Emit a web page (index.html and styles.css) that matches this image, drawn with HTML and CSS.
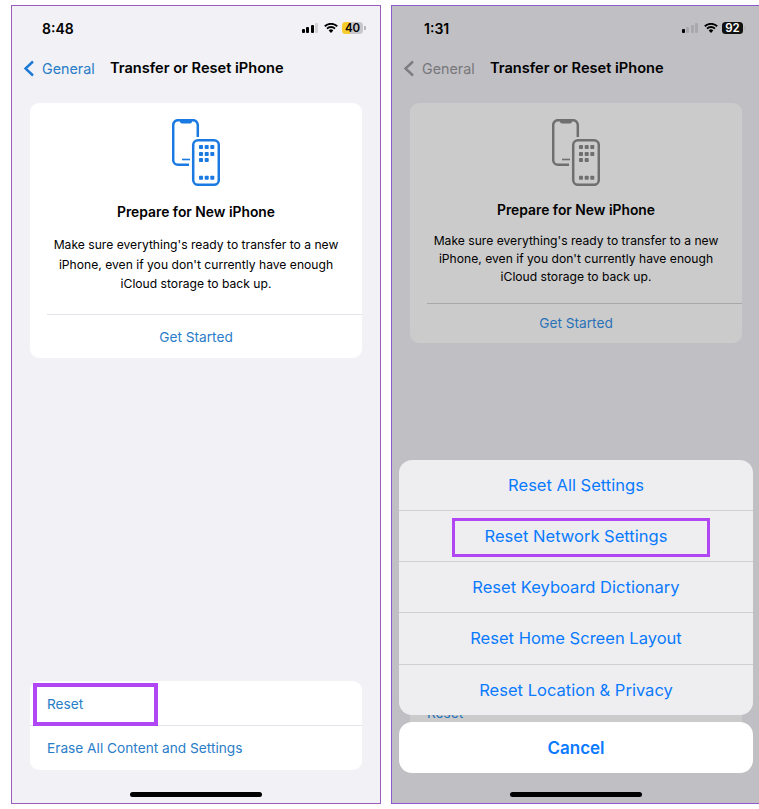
FILE: index.html
```html
<!DOCTYPE html>
<html lang="en">
<head>
<meta charset="UTF-8" />
<meta name="viewport" content="width=device-width, initial-scale=1" />
<title>Transfer or Reset iPhone</title>
<link rel="stylesheet" href="styles.css">
</head>
<body>

<svg class="defs" width="0" height="0">
  <symbol id="wifi" viewBox="0 0 14 10">
    <path d="M7 10 4.700 7.400a3.400 3.400 0 0 1 4.600 0Z" fill="currentColor"/>
    <path d="M3 5.600a5.800 5.800 0 0 1 8 0M.8 3.300a9 9 0 0 1 12.400 0" fill="none" stroke="currentColor" stroke-width="1.900"/>
  </symbol>
  <symbol id="devices" viewBox="0 0 48 67">
    <g fill="none" stroke="currentColor" stroke-width="2.5">
      <path d="M25.8 18V6a4.8 4.8 0 0 0-4.8-4.8H6A4.8 4.8 0 0 0 1.200 6v35A4.800 4.800 0 0 0 6 45.800h11"/>
      <path d="M10 40.500h8" stroke-width="1.600"/>
      <rect x="21.200" y="21.200" width="25.600" height="44.600" rx="4.800"/>
    </g>
    <g fill="currentColor">
      <path d="M8 1h12v1.500a2 2 0 0 1-2 2h-8a2 2 0 0 1-2-2Z"/>
      <rect x="27" y="26" width="4" height="4" rx=".8"/><rect x="32.700" y="26" width="4" height="4" rx=".8"/><rect x="38.300" y="26" width="4" height="4" rx=".8"/>
      <rect x="27" y="33" width="4" height="4" rx=".8"/><rect x="32.700" y="33" width="4" height="4" rx=".8"/><rect x="38.300" y="33" width="4" height="4" rx=".8"/>
      <rect x="27" y="39" width="4" height="4" rx=".8"/><rect x="32.700" y="39" width="4" height="4" rx=".8"/>
      <rect x="27" y="56.700" width="4" height="4" rx=".8"/><rect x="32.700" y="56.700" width="4" height="4" rx=".8"/><rect x="38.300" y="56.700" width="4" height="4" rx=".8"/>
    </g>
  </symbol>
</svg>

<div class="phone phone-light">
  <div class="status">
    <span class="clock">8:48</span>
    <div class="status-icons">
      <div class="signal">
        <i class="bar bar-1"></i><i class="bar bar-2"></i><i class="bar bar-3"></i><i class="bar bar-4 off"></i>
      </div>
      <svg class="wifi"><use href="#wifi"/></svg>
      <div class="battery battery-low">40</div>
    </div>
  </div>

  <div class="nav">
    <svg class="chevron" viewBox="0 0 12 17"><path d="M10 1.500 2.500 8.500 10 15.500" fill="none" stroke="currentColor" stroke-width="2.400"/></svg>
    <span class="back">General</span>
    <span class="nav-title">Transfer or Reset iPhone</span>
  </div>

  <div class="card">
    <svg class="device-icon"><use href="#devices"/></svg>
    <div class="card-title">Prepare for New iPhone</div>
    <p class="card-text">Make sure everything's ready to transfer to a new iPhone, even if you don't currently have enough iCloud storage to back up.</p>
    <div class="card-link">Get Started</div>
  </div>

  <div class="list">
    <div class="list-row">Reset</div>
    <div class="list-row">Erase All Content and Settings</div>
    <div class="highlight highlight-reset"></div>
  </div>

  <div class="home-bar"></div>
</div>

<div class="phone phone-dim">
  <div class="status">
    <span class="clock">1:31</span>
    <div class="status-icons">
      <div class="signal">
        <i class="bar bar-1"></i><i class="bar bar-2 off"></i><i class="bar bar-3 off"></i><i class="bar bar-4 off"></i>
      </div>
      <svg class="wifi"><use href="#wifi"/></svg>
      <div class="battery battery-full">92</div>
    </div>
  </div>

  <div class="nav">
    <svg class="chevron" viewBox="0 0 12 17"><path d="M10 1.500 2.500 8.500 10 15.500" fill="none" stroke="currentColor" stroke-width="2.400"/></svg>
    <span class="back">General</span>
    <span class="nav-title">Transfer or Reset iPhone</span>
  </div>

  <div class="card">
    <svg class="device-icon"><use href="#devices"/></svg>
    <div class="card-title">Prepare for New iPhone</div>
    <p class="card-text">Make sure everything's ready to transfer to a new iPhone, even if you don't currently have enough iCloud storage to back up.</p>
    <div class="card-link">Get Started</div>
  </div>

  <div class="list">
    <div class="list-row">Reset</div>
  </div>

  <div class="sheet">
    <div class="sheet-group">
      <div class="sheet-row">Reset All Settings</div>
      <div class="sheet-row">Reset Network Settings</div>
      <div class="sheet-row">Reset Keyboard Dictionary</div>
      <div class="sheet-row">Reset Home Screen Layout</div>
      <div class="sheet-row">Reset Location &amp; Privacy</div>
      <div class="highlight highlight-network"></div>
    </div>
    <div class="sheet-cancel">Cancel</div>
  </div>

  <div class="home-bar"></div>
</div>

</body>
</html>
```

FILE: styles.css
```css
body {
  margin: 0;
  width: 759px;
  height: 809px;
  overflow: hidden;
  box-sizing: border-box;
  padding: 5px 0 5px 11px;
  display: flex;
  gap: 10px;
  background: #fff;
  font-family: Inter, "Liberation Sans", sans-serif;
}

.defs {
  position: absolute;
}

.phone {
  position: relative;
  flex: none;
  width: 370px;
  height: 799px;
  box-sizing: border-box;
  display: flex;
  flex-direction: column;
  overflow: hidden;
}

.phone-light {
  background: #f1f1f6;
  border: 1px solid #9a5cb8;
  color: #000;
  --blue: #2a7dc8;
  --chev: #1c7ad6;
  --muted: #2a7dc8;
  --card: #fff;
  --line: #e4e3ea;
  --icon: #1a7ae2;
}

.phone-dim {
  background: #c0bfc4;
  border: 1px solid #8f5ad0;
  color: #000;
  --blue: #2a72b8;
  --chev: #7d7d80;
  --muted: #77777a;
  --card: #cbcbcb;
  --line: #a9a9aa;
  --icon: #6f6f70;
}

/* status bar */
.status {
  height: 44px;
  display: flex;
  align-items: center;
  justify-content: space-between;
  padding-right: 17px;
}

.phone-light .status {
  padding-left: 30px;
}

.phone-dim .status {
  padding-left: 32px;
}

.clock {
  font-size: 14px;
  font-weight: 600;
}

.status-icons {
  display: flex;
  align-items: center;
}

.signal {
  display: flex;
  align-items: flex-end;
  gap: 1.500px;
  width: 16px;
  height: 10px;
  margin-right: 6px;
}

.bar {
  display: block;
  width: 3px;
  background: #000;
  border-radius: 1px;
}

.bar.off {
  background: #a9a9ad;
}

.phone-light .bar.off {
  background: #d2d2d6;
}

.bar-1 { height: 4px; }
.bar-2 { height: 6px; }
.bar-3 { height: 8px; }
.bar-4 { height: 10px; }

.wifi {
  width: 14px;
  height: 10px;
  margin-right: 4px;
  color: #000;
}

.battery {
  position: relative;
  width: 21px;
  height: 12px;
  border-radius: 3.500px;
  font-size: 11.500px;
  font-weight: 600;
  line-height: 12px;
  text-align: center;
}

.battery::after {
  content: "";
  position: absolute;
  right: -2.500px;
  top: 4px;
  width: 1.500px;
  height: 4px;
  border-radius: 0 1px 1px 0;
  background: #b5b5b8;
}

.battery-low {
  background: linear-gradient(to right, #f7cd2e 40%, #c8c8cb 40%);
  color: #000;
}

.battery-full {
  background: #111;
  color: #fff;
}

/* nav */
.nav {
  height: 34px;
  display: flex;
  align-items: center;
  padding-left: 11px;
  margin-top: 1px;
}

.chevron {
  width: 12px;
  height: 17px;
  color: var(--chev);
  margin-right: 7px;
}

.back {
  color: var(--muted);
  width: 68px;
  font-size: 14.300px;
}

.nav-title {
  font-size: 14.600px;
  font-weight: 600;
}

/* top card */
.card {
  margin: 18px 18px 0;
  background: var(--card);
  border-radius: 9px;
  display: flex;
  flex-direction: column;
  align-items: center;
}

.device-icon {
  width: 48px;
  height: 67px;
  margin-top: 16px;
  color: var(--icon);
}

.card-title {
  margin-top: 18px;
  font-size: 13.850px;
  font-weight: 600;
  line-height: 17px;
}

.card-text {
  margin: 14px 0 0;
  padding: 0 20px;
  font-size: 12.130px;
  line-height: 19.500px;
  text-align: center;
}

.card-link {
  align-self: stretch;
  margin: 20px 0 0 17px;
  padding-right: 17px;
  border-top: 1px solid var(--line);
  height: 43px;
  line-height: 44px;
  font-size: 13.700px;
  text-align: center;
  color: var(--blue);
}

.phone-dim .card-title {
  margin-top: 16px;
}

.phone-dim .card-text {
  margin-top: 13px;
  line-height: 18px;
}

.phone-dim .card-link {
  margin-top: 17px;
  height: 39px;
  line-height: 39px;
}

/* bottom list */
.list {
  position: relative;
  margin: auto 18px 33px;
  background: var(--card);
  border-radius: 9px;
}

.list-row {
  height: 44px;
  line-height: 46px;
  padding-left: 17px;
  font-size: 13.700px;
  color: var(--blue);
}

.list-row + .list-row {
  line-height: 44px;
  border-top: 1px solid var(--line);
}

.phone-dim .list {
  height: 80px;
  margin-bottom: 33px;
}

.home-bar {
  position: absolute;
  left: 118px;
  bottom: 6px;
  width: 132px;
  height: 5px;
  border-radius: 3px;
  background: #000;
}

/* action sheet */
.sheet {
  position: absolute;
  left: 7px;
  right: 7px;
  top: 454px;
  color: #0a7aff;
}

.sheet-group {
  position: relative;
  background: #eeeef0;
  border-radius: 13px;
}

.sheet-row {
  height: 50px;
  line-height: 50px;
  text-align: center;
  font-size: 16.550px;
}

.sheet-row + .sheet-row {
  height: 50.200px;
  border-top: 1px solid #cfcfd2;
}

.sheet-cancel {
  margin-top: 7px;
  height: 51px;
  line-height: 53px;
  border-radius: 13px;
  background: #fff;
  text-align: center;
  font-size: 17px;
  font-weight: 600;
}

/* purple marker boxes */
.highlight {
  position: absolute;
  box-sizing: border-box;
  border-style: solid;
  border-color: #b146f5;
}

.highlight-reset {
  left: 3px;
  top: 2px;
  width: 125px;
  height: 43px;
  border-width: 4px;
}

.highlight-network {
  left: 53px;
  top: 58px;
  width: 258px;
  height: 39px;
  border-width: 3px;
}
```
